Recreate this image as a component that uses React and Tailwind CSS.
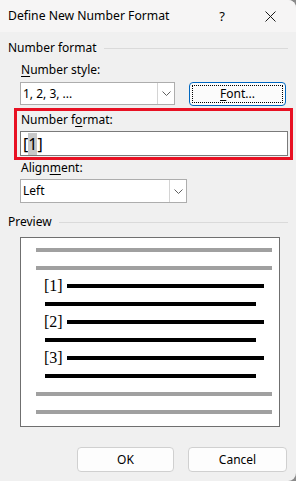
import React from "react";

function Chevron() {
  return (
    <svg width="9" height="5" viewBox="0 0 9 5" fill="none">
      <path d="M0.5 0.5 L4.5 4.5 L8.5 0.5" stroke="#606060" strokeWidth="1" />
    </svg>
  );
}

function Combo({ text, width }) {
  return (
    <div className={`flex h-full ${width} border border-[#adadad] bg-white`}>
      <div className="flex flex-1 items-center pl-[2px] text-black">{text}</div>
      <div className="flex w-[17px] items-center justify-center border-l border-[#d4d4d4] bg-white">
        <Chevron />
      </div>
    </div>
  );
}

function Line({ left, width, gray }) {
  return (
    <div className="flex h-[18px] items-center">
      <div
        className={`${left} ${width} h-[4px] ${gray ? "bg-[#a0a0a0]" : "bg-black"}`}
      />
    </div>
  );
}

function NumRow({ n }) {
  return (
    <div className="flex h-[18px] items-center">
      <span
        className="ml-[23px] w-[22px] text-[16px] leading-[18px] text-black"
        style={{ fontFamily: '"Liberation Serif", serif' }}
      >
        [{n}]
      </span>
      <div className="ml-[1px] h-[4px] w-[197px] bg-black" />
    </div>
  );
}

export default function App() {
  return (
    <div
      className="h-[481px] w-[296px] bg-[#8a8a8a] text-[12px] leading-[16px] text-black"
      style={{ fontFamily: '"Noto Sans", "Open Sans", sans-serif' }}
    >
      <div className="flex h-full w-full flex-col overflow-hidden rounded-r-[8px] bg-[#f0f0f0]">
        {/* Title bar */}
        <div className="flex h-[32px] shrink-0 items-center bg-[#f6f5f5] pl-[8px]">
          <span className="text-[12.2px]">Define New Number Format</span>
          <div className="flex-1" />
          <span className="text-[13px]">?</span>
          <svg className="ml-[40px] mr-[20px]" width="11" height="11" viewBox="0 0 11 11">
            <path d="M0.5 0.5 L10.5 10.5 M10.5 0.5 L0.5 10.5" stroke="#1a1a1a" strokeWidth="1" />
          </svg>
        </div>

        {/* Number format group header */}
        <div className="mt-[8px] flex h-[16px] items-center pl-[8px] pr-[8px]">
          <span>Number format</span>
          <div className="ml-[7px] h-px flex-1 bg-[#dadada]" />
        </div>

        <div className="mt-[6px] h-[16px] pl-[21px]">
          <span className="underline decoration-1 underline-offset-2">N</span>umber style:
        </div>

        <div className="mt-[4px] flex h-[23px]">
          <div className="ml-[20px] h-full">
            <Combo text="1, 2, 3, ..." width="w-[155px]" />
          </div>
          <div className="ml-[14px] h-[24px] w-[97px] rounded-[4px] border border-[#0067c0] bg-[#fbfbfb] p-[2px]">
            <div className="flex h-full w-full items-center justify-center border border-dotted border-black">
              <span className="underline decoration-1 underline-offset-2">F</span>ont...
            </div>
          </div>
        </div>

        {/* Red highlight box */}
        <div className="ml-[14px] mt-[3px] h-[52px] w-[279px] border-[3px] border-[#e81123]">
          <div className="mt-[1px] h-[16px] pl-[4px]">
            Number f<span className="underline decoration-1 underline-offset-2">o</span>rmat:
          </div>
          <div className="ml-[3px] mt-[3px] flex h-[25px] w-[268px] items-center border border-[#7a7a7a] bg-white pl-[2px]">
            <span
              className="text-[16px] leading-[20px]"
              style={{ fontFamily: '"Noto Sans", sans-serif' }}
            >
              [<span className="bg-[#c8c8c8]">1</span>]
            </span>
          </div>
        </div>

        <div className="h-[16px] pl-[21px]">
          Align<span className="underline decoration-1 underline-offset-2">m</span>ent:
        </div>
        <div className="ml-[20px] mt-[3px] h-[24px]">
          <Combo text="Left" width="w-[167px]" />
        </div>

        {/* Preview header */}
        <div className="mt-[11px] flex h-[16px] items-center pl-[8px] pr-[8px]">
          <span>Preview</span>
          <div className="ml-[7px] h-px flex-1 bg-[#dadada]" />
        </div>

        <div className="ml-[20px] mt-[7px] h-[190px] w-[260px] border border-[#6f6f6f] bg-white pt-[3px]">
          <Line left="ml-[15px]" width="w-[236px]" gray />
          <Line left="ml-[15px]" width="w-[236px]" gray />
          <NumRow n={1} />
          <Line left="ml-[24px]" width="w-[211px]" />
          <NumRow n={2} />
          <Line left="ml-[24px]" width="w-[211px]" />
          <NumRow n={3} />
          <Line left="ml-[24px]" width="w-[211px]" />
          <Line left="ml-[15px]" width="w-[236px]" gray />
          <Line left="ml-[15px]" width="w-[236px]" gray />
        </div>

        {/* Buttons */}
        <div className="mt-auto mb-[9px] flex justify-end gap-[14px] pr-[9px]">
          <div className="flex h-[25px] w-[97px] items-center justify-center rounded-[4px] border border-[#d0d0d0] bg-[#fdfdfd]">
            OK
          </div>
          <div className="flex h-[25px] w-[99px] items-center justify-center rounded-[4px] border border-[#d0d0d0] bg-[#fdfdfd]">
            Cancel
          </div>
        </div>
      </div>
    </div>
  );
}
